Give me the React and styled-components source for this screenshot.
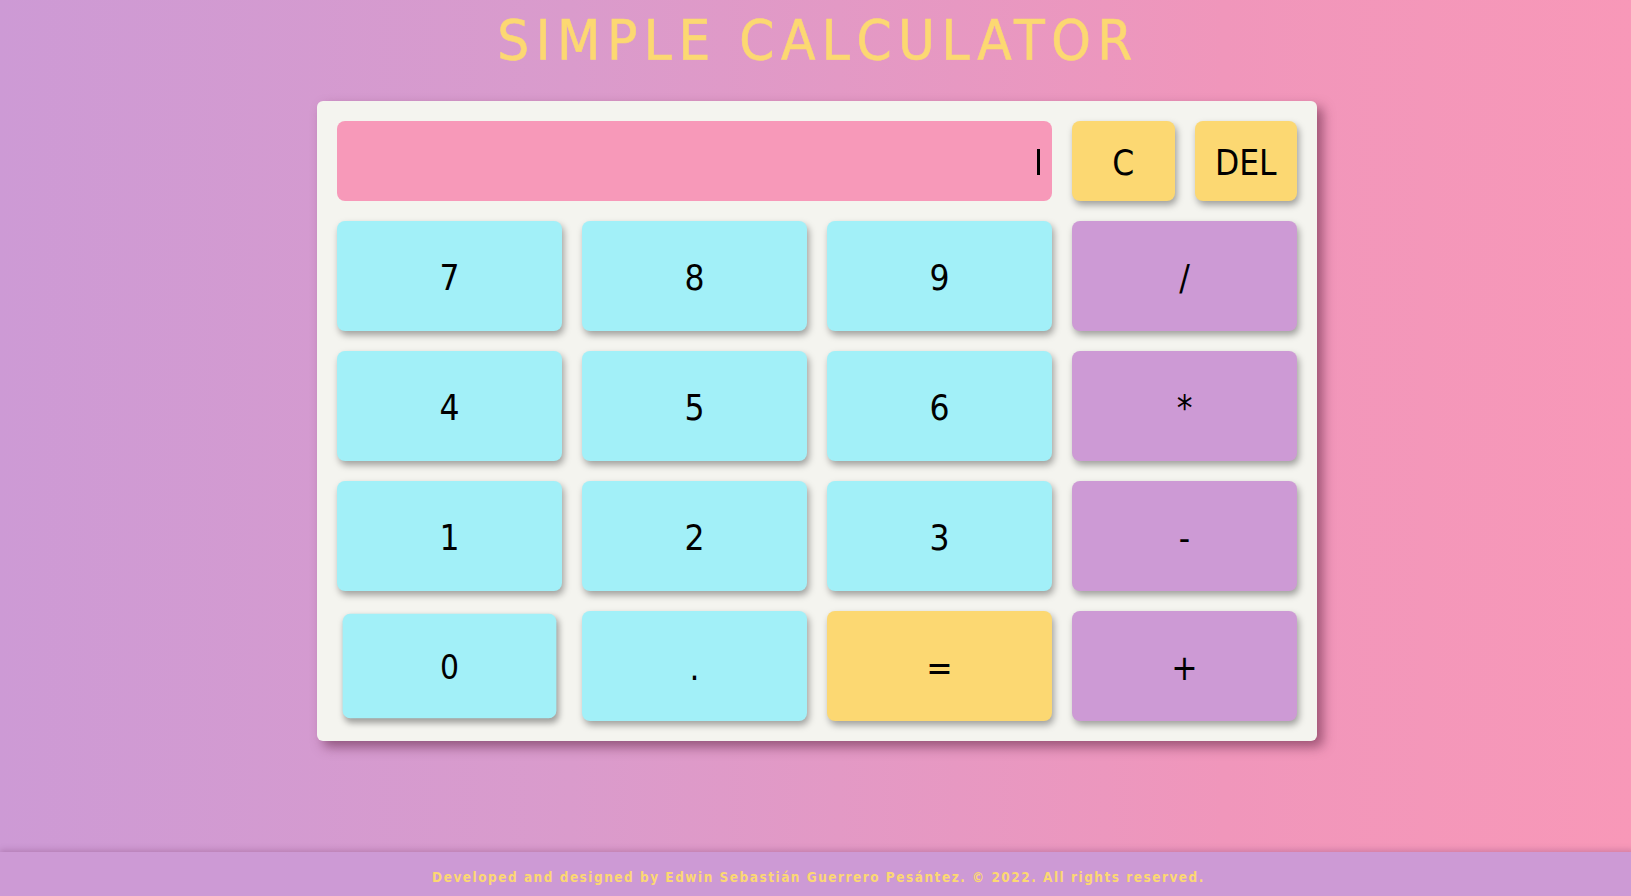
import React from 'react';
import styled, { createGlobalStyle } from 'styled-components';

const GlobalStyle = createGlobalStyle`
  * {
    box-sizing: border-box;
  }

  body {
    margin: 0;
    font-family: "DejaVu Sans Condensed", "DejaVu Sans", sans-serif;
  }
`;

const Page = styled.div`
  min-height: 100vh;
  display: flex;
  flex-direction: column;
  align-items: center;
  padding-left: 3px;
  background: linear-gradient(to right, #cd9ad5 0%, #da9bcc 35%, #f096bb 75%, #f898b8 100%);
`;

const Title = styled.h1`
  margin: 12px 0 33px 0;
  padding-left: 2px;
  font-family: "DejaVu Sans Condensed", "DejaVu Sans", sans-serif;
  font-weight: 400;
  font-size: 56px;
  line-height: 1;
  letter-spacing: 6.5px;
  color: #fcd872;
  -webkit-text-stroke: 0.6px #fcd872;
`;

const Calculator = styled.div`
  width: 1000px;
  padding: 20px;
  background: #f4f4ef;
  border-radius: 6px;
  box-shadow: 6px 6px 12px rgba(90, 30, 60, 0.55);
  display: grid;
  grid-template-columns: repeat(4, 1fr);
  grid-template-rows: 80px repeat(4, 110px);
  gap: 20px;
`;

const Display = styled.div`
  grid-column: span 3;
  background: #f799b9;
  border-radius: 8px;
  display: flex;
  align-items: center;
  justify-content: flex-end;
  padding: 2px 12px 0 0;
`;

const Caret = styled.span`
  display: block;
  width: 3px;
  height: 26px;
  background: #000;
`;

const TopKeys = styled.div`
  display: flex;
  gap: 20px;
`;

const palette = {
  number: '#a2f0f8',
  operator: '#cd9ad5',
  action: '#fcd872',
};

const Key = styled.button`
  flex: 1;
  border: none;
  border-radius: 8px;
  background: ${props => palette[props.$kind]};
  color: #000;
  font-family: "DejaVu Sans Condensed", "DejaVu Sans", sans-serif;
  font-size: 35px;
  box-shadow: 2px 4px 7px rgba(0, 0, 0, 0.35);
  cursor: pointer;
  transform: ${props => (props.$pressed ? 'scale(0.95)' : 'none')};
  transition: transform 0.15s ease;
  padding: 4px 0 0 0;

  &:hover {
    transform: scale(0.95);
  }
`;

const Footer = styled.footer`
  align-self: stretch;
  margin: auto -3px 0 -3px;
  height: 44px;
  background: #cd9ad5;
  box-shadow: 0 -2px 6px rgba(120, 60, 110, 0.3);
  display: flex;
  align-items: center;
  justify-content: center;
  padding: 5px 0 0 3px;
  font-family: "DejaVu Sans Condensed", "DejaVu Sans", sans-serif;
  font-weight: 700;
  font-size: 13.5px;
  letter-spacing: 1.5px;
  color: #fcd872;
`;

const keys = [
  ['7', 'number'], ['8', 'number'], ['9', 'number'], ['/', 'operator'],
  ['4', 'number'], ['5', 'number'], ['6', 'number'], ['*', 'operator'],
  ['1', 'number'], ['2', 'number'], ['3', 'number'], ['-', 'operator'],
  ['0', 'number', true], ['.', 'number'], ['=', 'action'], ['+', 'operator'],
];

const App = () => {
  return (
    <Page>
      <GlobalStyle />
      <Title>SIMPLE CALCULATOR</Title>

      <Calculator>
        <Display>
          <Caret />
        </Display>
        <TopKeys>
          <Key $kind="action">C</Key>
          <Key $kind="action">DEL</Key>
        </TopKeys>

        {keys.map(([label, kind, pressed]) => (
          <Key key={label} $kind={kind} $pressed={pressed}>
            {label}
          </Key>
        ))}
      </Calculator>

      <Footer>
        Developed and designed by Edwin Sebastián Guerrero Pesántez. © 2022. All rights reserved.
      </Footer>
    </Page>
  );
};

export default App;
